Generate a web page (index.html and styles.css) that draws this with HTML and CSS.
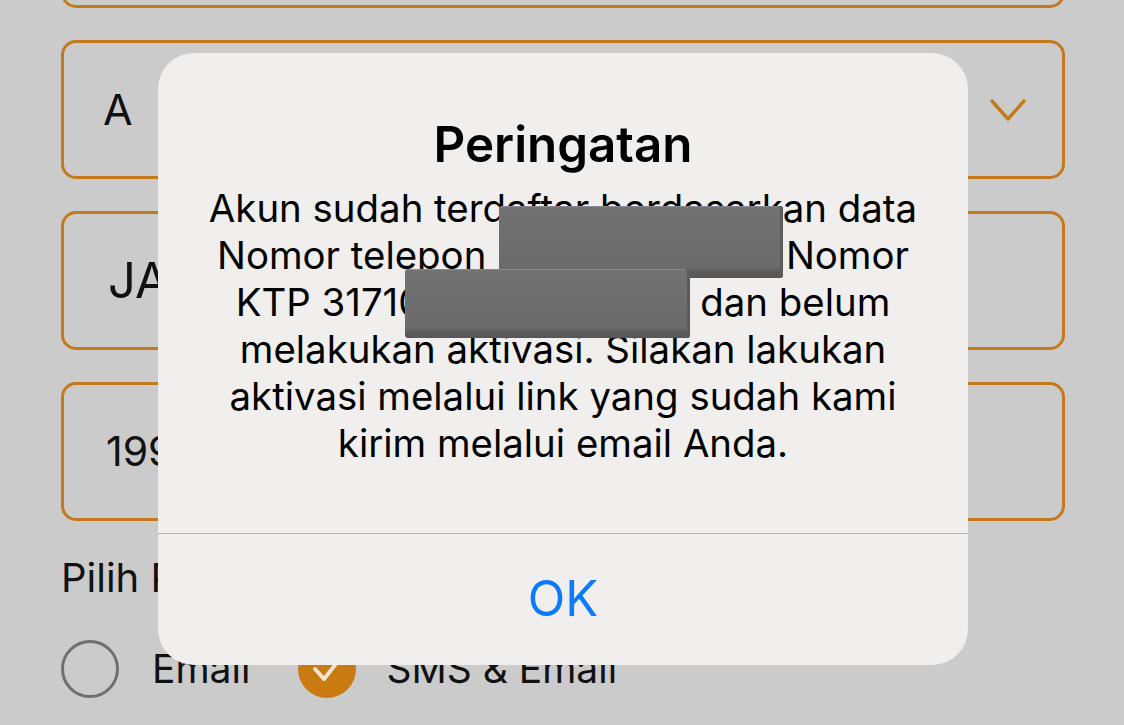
FILE: index.html
```html
<!DOCTYPE html>
<html lang="id">
<head>
<meta charset="utf-8">
<title>Peringatan</title>
<link rel="stylesheet" href="styles.css">
</head>
<body>
<div class="screen">
  <div class="form">
    <div class="field"></div>
    <div class="field field-select">
      <span class="val val-a">A</span>
      <svg class="chevron" width="36" height="24" viewBox="0 0 36 24"><path d="M2 3 L18 21 L34 3" fill="none" stroke="#c47a1c" stroke-width="3.4" stroke-linecap="round" stroke-linejoin="round"/></svg>
    </div>
    <div class="field"><span class="val val-ja">JAKARTA</span></div>
    <div class="field"><span class="val val-date">1990-01-01</span></div>
    <div class="label">Pilih Pengiriman Aktivasi</div>
    <div class="radios">
      <div class="radio-item">
        <span class="radio"></span>
        <span class="radio-text">Email</span>
      </div>
      <div class="radio-item">
        <span class="radio radio-on">
          <svg width="58" height="58" viewBox="0 0 58 58"><path d="M17 29 L26 39 L41 20" fill="none" stroke="#f4e6d2" stroke-width="4" stroke-linecap="round" stroke-linejoin="round"/></svg>
        </span>
        <span class="radio-text">SMS &amp; Email</span>
      </div>
    </div>
  </div>

  <div class="alert">
    <div class="alert-body">
      <div class="alert-title">Peringatan</div>
      <div class="alert-msg">Akun sudah terdaftar berdasarkan data<br>Nomor telepon <span class="gap gap-phone"></span> Nomor<br>KTP 31710<span class="gap gap-ktp"></span> dan belum<br>melakukan aktivasi. Silakan lakukan<br>aktivasi melalui link yang sudah kami<br>kirim melalui email Anda.</div>
    </div>
    <div class="alert-sep"></div>
    <div class="alert-btn">OK</div>
    <div class="redact redact-1"></div>
    <div class="redact redact-2"></div>
  </div>
</div>
</body>
</html>
```

FILE: styles.css
```css
* { box-sizing: border-box; }
html, body { margin: 0; padding: 0; }
body {
  background: #cbcbcb;
  font-family: "Inter", "Noto Sans", sans-serif;
  color: #111;
}
.screen {
  position: relative;
  width: 1124px;
  height: 725px;
  overflow: hidden;
}
.form {
  margin-top: -131px;
  padding-left: 61px;
  width: 1065px;
  display: flex;
  flex-direction: column;
}
.field {
  height: 139px;
  border: 3px solid #c47a1c;
  border-radius: 15px;
  display: flex;
  align-items: center;
  justify-content: space-between;
  padding: 0 36px 0 39px;
  margin-bottom: 32px;
}
.val { line-height: 1; }
.val-a { font-size: 43px; }
.val-ja { font-size: 49px; padding-left: 5px; }
.val-date { font-size: 41px; padding-left: 3px; }
.chevron { display: block; }
.label {
  margin-top: 1px;
  font-size: 40px;
  line-height: 48px;
}
.radios {
  margin-top: 38px;
  display: flex;
  align-items: center;
}
.radio-item {
  display: flex;
  align-items: center;
  margin-right: 48px;
}
.radio {
  width: 58px;
  height: 58px;
  border-radius: 50%;
  border: 3px solid #6f6f6f;
  margin-right: 33px;
  display: block;
}
.radio-on {
  background: #c97a10;
  border: none;
  margin-right: 30px;
}
.radio-on svg { display: block; }
.radio-text { font-size: 39px; line-height: 48px; }

.alert {
  position: absolute;
  left: 158px;
  top: 53px;
  width: 810px;
  height: 612px;
  background: #f0efee;
  border-radius: 36px;
  display: flex;
  flex-direction: column;
  overflow: hidden;
}
.alert-body {
  height: 480px;
  padding-top: 62px;
  text-align: center;
}
.alert-title {
  font-size: 49.3px;
  font-weight: 600;
  line-height: 58px;
  color: #000;
}
.alert-msg {
  margin-top: 12px;
  font-size: 38.4px;
  line-height: 47px;
  color: #000;
  white-space: nowrap;
}
.gap { display: inline-block; }
.gap-phone { width: 278px; }
.gap-ktp { width: 267px; }
.alert-sep {
  height: 1px;
  background: #b3b3b3;
}
.alert-btn {
  flex: 1;
  display: flex;
  align-items: center;
  justify-content: center;
  font-size: 49px;
  color: #0a7aff;
  padding-bottom: 2px;
}
.redact {
  position: absolute;
  background: linear-gradient(180deg, #727273 0%, #6b6b6c 85%, #5a5a5b 92%, #575758 100%);
  border-radius: 3px;
  box-shadow: inset -3px 0 0 #5c5c5d, inset 0 1px 0 #8a8a96;
}
.redact-1 { left: 341px; top: 153px; width: 284px; height: 72px; }
.redact-2 { left: 247px; top: 216px; width: 285px; height: 69px; }
```
